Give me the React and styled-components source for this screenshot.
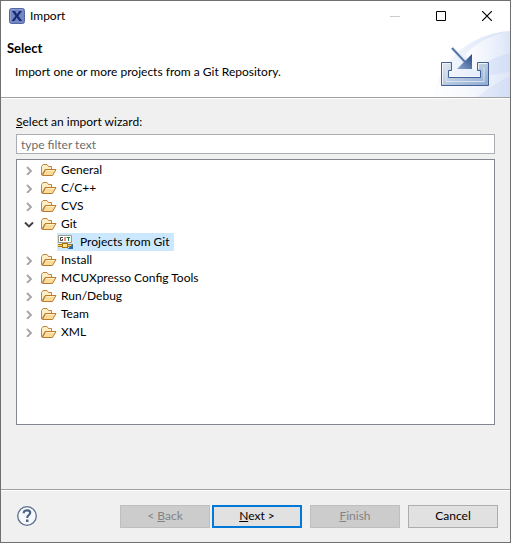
import React, { useState } from "react";
import styled, { createGlobalStyle } from "styled-components";

const GlobalStyle = createGlobalStyle`
  * { box-sizing: border-box; }
  body {
    margin: 0;
    background: #f0f0f0;
    color: #000;
    font: 12px/18px Lato, "Open Sans", sans-serif;
  }
  button, input { font: inherit; color: inherit; }
  u { text-underline-offset: 1px; text-decoration-thickness: 1px; text-decoration-skip-ink: none; }
`;

const Dialog = styled.main`
  display: flex;
  flex-direction: column;
  min-height: 100vh;
  border: 1px solid #707070;
`;

const Banner = styled.header`
  position: relative;
  height: 97px;
  background: #fff;
  border-bottom: 1px solid #a0a0a0;
  flex: none;
`;

const BannerArt = styled.svg`
  position: absolute;
  right: 0;
  bottom: 0;
`;

const TitleBar = styled.div`
  display: flex;
  align-items: center;
  height: 29px;
  padding-left: 8px;
`;

const WindowTitle = styled.span`
  flex: 1;
  margin-left: 5px;
`;

const CaptionButton = styled.button`
  display: flex;
  align-items: center;
  justify-content: center;
  width: 46px;
  height: 28px;
  padding: 0;
  border: 0;
  background: transparent;
`;

const Heading = styled.h1`
  margin: 9px 0 0 6px;
  font-size: 13px;
  line-height: 18px;
  font-weight: 700;
`;

const Description = styled.p`
  margin: 6px 0 0 14px;
`;

const Body = styled.section`
  display: flex;
  flex: 1;
  flex-direction: column;
  padding: 14px 15px 64px;
  border-top: 1px solid #fff;
`;

const FilterLabel = styled.label`
  align-self: flex-start;
`;

const FilterInput = styled.input`
  height: 20px;
  margin: 3px 0 5px;
  padding: 0 4px;
  border: 1px solid #abadb3;
  border-radius: 0;
  background: #fff;
  outline: none;
  &::placeholder { color: #6d6d6d; opacity: 1; }
`;

const Tree = styled.ul`
  flex: 1;
  margin: 0;
  padding: 1px 0;
  list-style: none;
  border: 1px solid #828790;
  background: #fff;
`;

const Group = styled.ul`
  margin: 0;
  padding: 0 0 0 40px;
  list-style: none;
`;

const Row = styled.div`
  display: flex;
  align-items: center;
  height: 18px;
  padding-left: 6px;
`;

const Toggle = styled.button`
  display: flex;
  align-items: center;
  justify-content: center;
  width: 12px;
  height: 18px;
  margin-right: 6px;
  padding: 0;
  border: 0;
  background: transparent;
`;

const RowLabel = styled.span`
  margin-left: 4px;
  white-space: nowrap;
`;

const Leaf = styled.button`
  display: flex;
  align-items: center;
  gap: 2px;
  height: 18px;
  padding: 0 4px 0 1px;
  border: 0;
  background: ${(p) => (p.$selected ? "#cce8ff" : "transparent")};
`;

const Footer = styled.footer`
  display: flex;
  align-items: center;
  height: 53px;
  padding: 0 12px 0 15px;
  border-top: 1px solid #a0a0a0;
  box-shadow: inset 0 1px #fff;
`;

const HelpButton = styled.button`
  display: flex;
  margin-right: auto;
  padding: 0;
  border: 0;
  background: transparent;
`;

const Pair = styled.div`
  display: flex;
  gap: 2px;
`;

const PushButton = styled.button`
  width: 90px;
  height: 23px;
  margin: 0;
  padding: 0;
  line-height: 18px;
  border: ${(p) => (p.$primary ? "2px solid #0078d7" : "1px solid #adadad")};
  background: #e1e1e1;
  &:disabled { border-color: #bfbfbf; background: #ccc; color: #838383; }
`;

const Actions = styled.div`
  display: flex;
  gap: 8px;
`;

const AppIcon = () => (
  <svg width="16" height="16" viewBox="0 0 16 16" aria-hidden="true">
    <rect x=".5" y=".5" width="15" height="15" rx="2" fill="#7385c2" stroke="#5668a3" />
    <path d="M1.5 14V2.5Q1.5 1.5 3 1.5H14" fill="none" stroke="#8d9bcc" />
    <path d="M3 3H6L8 6.300L10.300 3H13L9.400 7.900L13.200 13H10.200L7.800 9.600L5.400 13H2.600L6.400 7.900Z" fill="#152c74" />
  </svg>
);

const BannerDrawing = () => (
  <BannerArt width="80" height="68" viewBox="0 0 80 68" aria-hidden="true">
    <defs>
      <linearGradient id="sky" x1="0" x2="1">
        <stop offset="0" stopColor="#f8faff" />
        <stop offset=".5" stopColor="#e8eefb" />
        <stop offset="1" stopColor="#d3def5" />
      </linearGradient>
      <linearGradient id="haze" x1="0" x2="1">
        <stop offset="0" stopColor="#fff" stopOpacity=".8" />
        <stop offset="1" stopColor="#fff" stopOpacity=".2" />
      </linearGradient>
      <linearGradient id="steel" x1="0" y1="0" x2="1" y2="1">
        <stop offset="0" stopColor="#dfe8f3" />
        <stop offset=".5" stopColor="#b9cae2" />
        <stop offset="1" stopColor="#8faad2" />
      </linearGradient>
      <linearGradient id="arrow" x1="0" y1="1" x2="1" y2="0">
        <stop offset="0" stopColor="#8fa9d1" />
        <stop offset="1" stopColor="#244a86" />
      </linearGradient>
    </defs>
    <path d="M5 68C7 34 38 5 80 2V68Z" fill="url(#sky)" />
    <path d="M35 25C49 12 64 5 80 2V24C64 28 52 35 44 42Z" fill="url(#haze)" />
    <path d="M50 47Q66 46 80 43V47Q62 56 47 68H5Q7 57 13 47Z" fill="url(#haze)" />
    <path d="M11.500 33.500H21.500V41.500H18.500V48.500H50.500V41.500H47.500V33.500H58.500V56.500H11.500Z" fill="url(#steel)" stroke="#416195" />
    <path d="M12.500 55V34.500H20M48.500 40V34.500H57" fill="none" stroke="#f1f5fb" />
    <path d="M16 38V52.500H54V38" fill="none" stroke="#e4ecf7" opacity=".8" />
    <path d="M22 19L36 34" stroke="#b5c6e0" strokeWidth="3" />
    <path d="M22 19L36 34" stroke="#456b9f" strokeWidth="1.500" />
    <path d="M42 25V40H27Z" fill="url(#arrow)" />
  </BannerArt>
);

const Folder = () => (
  <svg width="16" height="14" viewBox="0 0 16 14" aria-hidden="true">
    <path d="M.5 12V3.500L2 1.500H6L7.500 3.500H10.500V6.500H4L1 12Z" fill="#fdedc4" stroke="#bd8446" />
    <path d="M1.500 12.500L4.500 6.500H15L11.500 12.500Z" fill="#fbdc9a" stroke="#b9792f" />
    <path d="M5 7.500H13.500" stroke="#fff1c4" />
  </svg>
);

const GitIcon = () => (
  <svg width="16" height="16" viewBox="0 0 16 16" aria-hidden="true">
    <path d="M.5 1.500H13.500V8.500H.5Z" fill="#fff" stroke="#9b9b8e" />
    <path d="M5 3.500H2.500V6.500H4.500V5" fill="none" stroke="#444" />
    <path d="M7 3V7" stroke="#d02820" />
    <path d="M8.500 3.500H12M10.500 3.500V7" stroke="#188034" />
    <path d="M0 11.500H15" stroke="#ad7a12" strokeWidth="3" />
    <path d="M0 11.500H14" stroke="#f3cd63" />
    <rect x="4.500" y="9.500" width="5" height="4" fill="#ffe292" stroke="#a87409" />
    <path d="M15 10V15H9.500Z" fill="#2869ab" />
  </svg>
);

const Chevron = ({ open }) => (
  <svg width="10" height="10" viewBox="0 0 10 10" fill="none" aria-hidden="true">
    {open ? (
      <path d="M1 3.500L5 7.500L9 3.500" stroke="#404040" strokeWidth="1.900" />
    ) : (
      <path d="M3 2L7 6L3 10" stroke="#a6a6a6" strokeWidth="1.900" />
    )}
  </svg>
);

const HelpIcon = () => (
  <svg width="22" height="22" viewBox="0 0 22 22" fill="none" aria-hidden="true">
    <circle cx="11" cy="11" r="9.300" fill="#f6f8fb" stroke="#5c7090" strokeWidth="1.300" />
    <path d="M7.800 8.300V7.300C8.600 4.600 14.200 4.700 14.200 7.800C14.200 10 11.200 10.200 11.200 13" stroke="#4e6487" strokeWidth="2.200" />
    <rect x="10" y="14.500" width="2.500" height="2.500" fill="#4e6487" />
  </svg>
);

const categories = [
  { name: "General" },
  { name: "C/C++" },
  { name: "CVS" },
  { name: "Git", wizards: ["Projects from Git"] },
  { name: "Install" },
  { name: "MCUXpresso Config Tools" },
  { name: "Run/Debug" },
  { name: "Team" },
  { name: "XML" },
];

export default function App() {
  const [expanded, setExpanded] = useState({ Git: true });
  const [selected, setSelected] = useState("Projects from Git");
  const toggle = (name) => setExpanded((e) => ({ ...e, [name]: !e[name] }));

  return (
    <>
      <GlobalStyle />
      <Dialog>
        <Banner>
          <BannerDrawing />
          <TitleBar>
            <AppIcon />
            <WindowTitle>Import</WindowTitle>
            <CaptionButton aria-label="Minimize" disabled>
              <svg width="10" height="10"><path d="M0 5.500H10" stroke="#ccc" /></svg>
            </CaptionButton>
            <CaptionButton aria-label="Maximize">
              <svg width="10" height="10"><path d="M.5.5H9.500V9.500H.5Z" fill="none" stroke="#000" /></svg>
            </CaptionButton>
            <CaptionButton aria-label="Close">
              <svg width="10" height="10"><path d="M0 0L10 10M10 0L0 10" stroke="#000" strokeWidth="1.200" /></svg>
            </CaptionButton>
          </TitleBar>
          <Heading>Select</Heading>
          <Description>Import one or more projects from a Git Repository.</Description>
        </Banner>
        <Body>
          <FilterLabel htmlFor="filter"><u>S</u>elect an import wizard:</FilterLabel>
          <FilterInput id="filter" type="text" placeholder="type filter text" />
          <Tree aria-label="Import wizards">
            {categories.map(({ name, wizards = [] }) => (
              <li key={name}>
                <Row>
                  <Toggle aria-label={name} aria-expanded={!!expanded[name]} onClick={() => toggle(name)}>
                    <Chevron open={expanded[name]} />
                  </Toggle>
                  <Folder />
                  <RowLabel>{name}</RowLabel>
                </Row>
                {expanded[name] && wizards.length > 0 && (
                  <Group>
                    {wizards.map((w) => (
                      <li key={w}>
                        <Leaf $selected={selected === w} onClick={() => setSelected(w)}>
                          <GitIcon />
                          <RowLabel>{w}</RowLabel>
                        </Leaf>
                      </li>
                    ))}
                  </Group>
                )}
              </li>
            ))}
          </Tree>
        </Body>
        <Footer>
          <HelpButton aria-label="Help"><HelpIcon /></HelpButton>
          <Actions>
            <Pair>
              <PushButton disabled>&lt; <u>B</u>ack</PushButton>
              <PushButton $primary><u>N</u>ext &gt;</PushButton>
            </Pair>
            <PushButton disabled><u>F</u>inish</PushButton>
            <PushButton>Cancel</PushButton>
          </Actions>
        </Footer>
      </Dialog>
    </>
  );
}
